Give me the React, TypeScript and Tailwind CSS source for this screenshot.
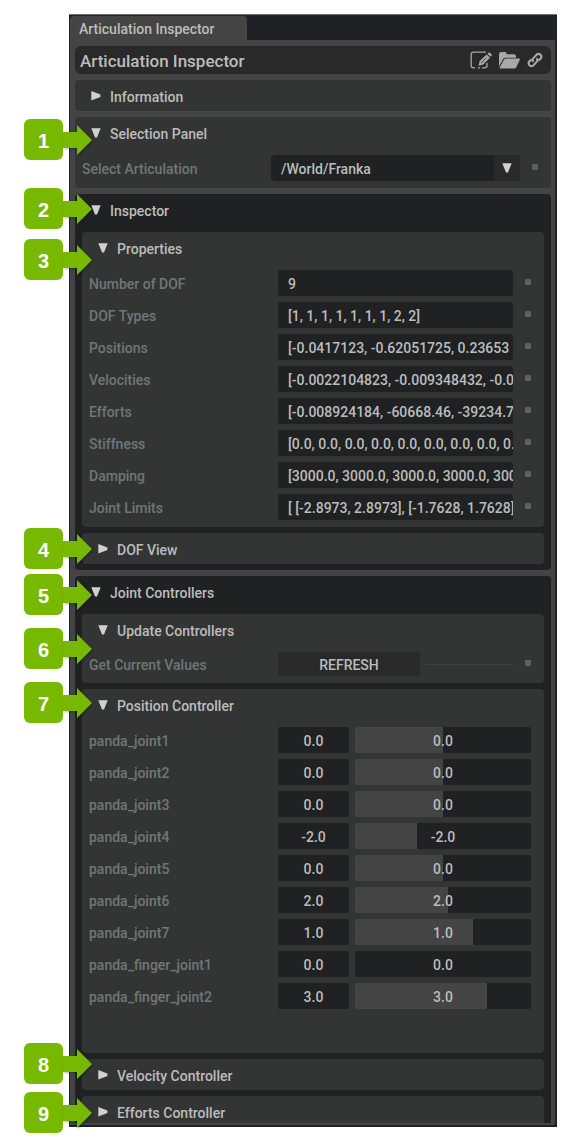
import { useState, type ReactNode } from "react";

const properties = [
  { label: "Number of DOF", value: "9" },
  { label: "DOF Types", value: "[1, 1, 1, 1, 1, 1, 1, 2, 2]" },
  { label: "Positions", value: "[-0.0417123, -0.62051725, 0.23653" },
  { label: "Velocities", value: "[-0.0022104823, -0.009348432, -0.0" },
  { label: "Efforts", value: "[-0.008924184, -60668.46, -39234.7" },
  { label: "Stiffness", value: "[0.0, 0.0, 0.0, 0.0, 0.0, 0.0, 0.0, 0.0, 0.0]" },
  { label: "Damping", value: "[3000.0, 3000.0, 3000.0, 3000.0, 3000.0]" },
  { label: "Joint Limits", value: "[ [-2.8973, 2.8973], [-1.7628, 1.7628]" },
];

const joints = [
  { name: "panda_joint1", value: "0.0", fill: 50 },
  { name: "panda_joint2", value: "0.0", fill: 50 },
  { name: "panda_joint3", value: "0.0", fill: 50 },
  { name: "panda_joint4", value: "-2.0", fill: 35 },
  { name: "panda_joint5", value: "0.0", fill: 50 },
  { name: "panda_joint6", value: "2.0", fill: 53 },
  { name: "panda_joint7", value: "1.0", fill: 67 },
  { name: "panda_finger_joint1", value: "0.0", fill: 0 },
  { name: "panda_finger_joint2", value: "3.0", fill: 75 },
];

// Callout pins that float over the window's left edge
const callouts = [
  { id: 1, top: 119 },
  { id: 2, top: 188 },
  { id: 3, top: 239 },
  { id: 4, top: 528 },
  { id: 5, top: 574 },
  { id: 6, top: 628 },
  { id: 7, top: 682 },
  { id: 8, top: 1043 },
  { id: 9, top: 1092 },
];

function Triangle({ open }: { open: boolean }) {
  return (
    <svg viewBox="0 0 10 10" className="w-[10px] h-[10px] fill-[#d0d0d0] shrink-0" aria-hidden="true">
      {open ? <path d="M0.3 0.3h9.4L6 9.4H4z" /> : <path d="M0.3 0v9.6L9.4 6V3.6z" />}
    </svg>
  );
}

type PanelProps = {
  title: string;
  defaultOpen?: boolean;
  className?: string;
  children?: ReactNode;
};

function Panel({ title, defaultOpen = false, className = "bg-[#333534] rounded", children }: PanelProps) {
  const [open, setOpen] = useState(defaultOpen);

  return (
    <section className={className}>
      <h2>
        <button
          type="button"
          aria-expanded={open}
          onClick={() => setOpen(!open)}
          className={`w-full flex gap-[9px] pl-4 text-left ${open ? "h-[38px] items-start pt-2" : "h-[31px] items-center pt-[2px]"}`}
        >
          <span className={open ? "pt-[3px]" : "pb-[2px]"}>
            <Triangle open={open} />
          </span>
          <span className="leading-[18px]">{title}</span>
        </button>
      </h2>
      {open && children}
    </section>
  );
}

function Dot() {
  return <span className="w-[6px] h-[6px] mb-[2px] rounded-[1px] bg-[#5e5f5f] shrink-0" />;
}

const labelClass = "w-[189px] shrink-0 pt-[2px] text-[#6f7777]";
const rowClass = "flex items-center pl-[7px] pr-[13px]";

function PropertyRow({ label, value }: { label: string; value: string }) {
  const id = label.toLowerCase().replaceAll(" ", "-");
  return (
    <div className={rowClass}>
      <label htmlFor={id} className={labelClass}>{label}</label>
      <input
        id={id}
        readOnly
        defaultValue={value}
        className="flex-1 min-w-0 h-[26px] pl-[10px] pt-[2px] mr-3 rounded-[2px] bg-[#1f2123] outline-none"
      />
      <Dot />
    </div>
  );
}

function JointRow({ name, value, fill }: { name: string; value: string; fill: number }) {
  const [level, setLevel] = useState(fill);
  return (
    <div className={rowClass}>
      <label htmlFor={name} className={labelClass}>{name}</label>
      <input
        id={name}
        defaultValue={value}
        className="w-[71px] h-[26px] pt-[2px] mr-[6px] rounded-[2px] bg-[#1f2123] text-center outline-none"
      />
      <div className="relative flex-1 h-[26px] rounded-[2px] overflow-hidden bg-[#1f2123]">
        <div className="h-full bg-[#444444]" style={{ width: `${level}%` }} />
        <span className="absolute inset-0 pt-[2px] flex items-center justify-center">{value}</span>
        <input
          type="range"
          aria-label={`${name} slider`}
          value={level}
          onChange={(e) => setLevel(Number(e.target.value))}
          className="absolute inset-0 w-full h-full opacity-0"
        />
      </div>
    </div>
  );
}

function Callout({ id, top }: { id: number; top: number }) {
  return (
    <div className="absolute left-6 flex items-center" style={{ top }}>
      <span className="w-[39px] h-[41px] pt-[2px] rounded-md bg-[#76b900] flex items-center justify-center text-white font-['Liberation_Sans',sans-serif] text-[20px] font-bold">
        {id}
      </span>
      <svg viewBox="0 0 29 30" className="w-[29px] h-[30px] fill-[#76b900] drop-shadow-[1px_1px_1px_rgba(0,0,0,0.3)]" aria-hidden="true">
        <path d="M0 7h14V0l15 15-15 15v-7H0z" />
      </svg>
    </div>
  );
}

function TitleBar() {
  return (
    <header className="flex items-center h-7 pl-[5px] pr-2 rounded-md bg-[#292929]">
      <h1 className="flex-1 pt-[2px] text-[17px]">Articulation Inspector</h1>
      <div className="flex items-center gap-[7px] text-[#a8a8a8]">
        <button type="button" aria-label="Edit source">
          <svg viewBox="0 0 22 18" className="w-[22px] h-[18px]" aria-hidden="true">
            <path d="M16 1.2H3.5Q1.2 1.2 1.2 3.5v11Q1.2 16.8 3.5 16.8H5M8 16.8h2M12 16.8h2.5q2.5 0 2.5-2V12" fill="none" stroke="currentColor" strokeWidth="1.3" />
            <path d="M8.5 14.8l1.2-4.8L16.6 3.4l3.4 3.4-6.8 6.6z" fill="currentColor" />
            <path d="M17.3 2.8l1.1-1.1q.7-.6 1.4 0l1.7 1.6q.6.7 0 1.4L20.5 5.8z" fill="currentColor" />
            <path d="M11 12l5.4-5.2" stroke="#292929" strokeWidth="0.8" />
          </svg>
        </button>
        <button type="button" aria-label="Open folder">
          <svg viewBox="0 0 21 17" className="w-[21px] h-[17px] fill-current" aria-hidden="true">
            <path d="M0 2.2Q0 0 2 0h4.2Q7.3 0 7.8 2.2H15q2 0 2 2v1.6H6.5Q4.8 5.8 4 7.2L0 14.5z" />
            <path d="M7 6.5h13.2q1.1.2.6 1.3l-3.5 7.5Q16.7 16.6 15.4 16.6H1.2q-1-.2-.5-1.2L4.7 7.9Q5.4 6.5 7 6.5z" />
          </svg>
        </button>
        <button type="button" aria-label="Copy link">
          <svg viewBox="0 0 16 16" className="w-4 h-4" fill="none" stroke="currentColor" strokeWidth="2.1" aria-hidden="true">
            <path d="M6.5 9.8Q4.7 8 6.4 6.1L9.5 2.8q2-1.9 4-.1 1.8 2 0 4l-2.2 2.1" />
            <path d="M9.5 6.2q1.8 1.8.1 3.7l-3.1 3.3q-2 1.9-4 .1-1.8-2 0-4l2.2-2.1" />
          </svg>
        </button>
      </div>
    </header>
  );
}

export default function App() {
  return (
    <div className="relative bg-white pt-[14px] pb-[21px] pl-[69px] pr-6 font-['Roboto',sans-serif] font-medium text-[14px] leading-[18px] text-[#bcbcbc]">
      <main className="bg-[#1f2124] border-t border-[#70726f] pl-px pr-[2px] pb-[2px]">
        <div className="pt-px h-[25px]" role="tablist">
          <button type="button" role="tab" aria-selected="true" className="w-[177px] h-6 pl-[9px] pt-[2px] text-left rounded-t-[4px] bg-[#444444]">
            Articulation Inspector
          </button>
        </div>

        <div className="flex flex-col gap-[6px] bg-[#444444] pt-[6px] pl-[5px] pr-1 pb-[2px]">
          <TitleBar />

          <Panel title="Information" />

          <Panel title="Selection Panel" defaultOpen>
            <div className={`${rowClass} pb-[7px]`}>
              <label htmlFor="articulation" className={labelClass}>Select Articulation</label>
              <div className="relative flex-1 mr-3">
                <select id="articulation" className="block w-full h-[26px] pl-[10px] pt-[2px] rounded-[4px] bg-[#1f2123] appearance-none outline-none">
                  <option>/World/Franka</option>
                </select>
                <span className="absolute right-0 inset-y-0 w-[26px] flex items-center justify-center rounded-r-[4px] bg-[#292929] pointer-events-none">
                  <Triangle open />
                </span>
              </div>
              <Dot />
            </div>
          </Panel>

          <Panel title="Inspector" defaultOpen className="bg-[#1f2123] rounded">
            <div className="flex flex-col gap-[6px] px-[7px] pb-[6px]">
              <Panel title="Properties" defaultOpen>
                <div className="flex flex-col gap-[6px] pb-[7px]">
                  {properties.map((p) => (
                    <PropertyRow key={p.label} {...p} />
                  ))}
                </div>
              </Panel>
              <Panel title="DOF View" />
            </div>
          </Panel>

          <Panel title="Joint Controllers" defaultOpen className="bg-[#1f2123] rounded-t">
            <div className="flex flex-col gap-[6px] px-[7px]">
              <Panel title="Update Controllers" defaultOpen>
                <div className={`${rowClass} pb-[7px]`}>
                  <span className={labelClass}>Get Current Values</span>
                  <button type="button" className="w-[142px] h-6 pt-[2px] rounded-[2px] bg-[#292929]">REFRESH</button>
                  <span className="flex-1 h-px ml-[6px] mr-3 bg-[#404241]" />
                  <Dot />
                </div>
              </Panel>
              <Panel title="Position Controller" defaultOpen>
                <div className="flex flex-col gap-[6px] pb-11">
                  {joints.map((joint) => (
                    <JointRow key={joint.name} {...joint} />
                  ))}
                </div>
              </Panel>
              <Panel title="Velocity Controller" />
              <Panel title="Efforts Controller" className="h-[27px] bg-[#333534] rounded-t" />
            </div>
          </Panel>
        </div>
      </main>

      {callouts.map((callout) => (
        <Callout key={callout.id} {...callout} />
      ))}
    </div>
  );
}
